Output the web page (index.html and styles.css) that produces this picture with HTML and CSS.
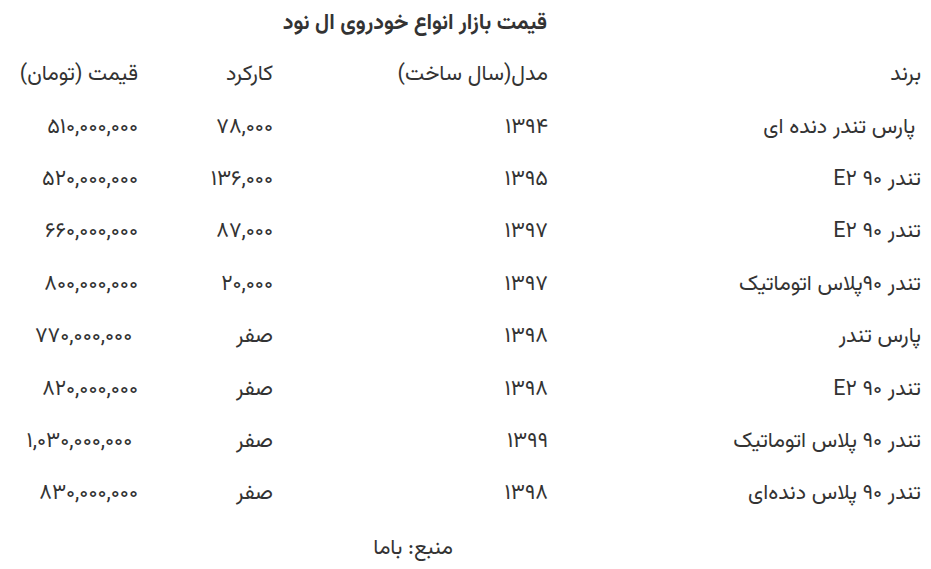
FILE: index.html
```html
<!DOCTYPE html>
<html lang="fa" dir="rtl">
<head>
<meta charset="utf-8">
<link rel="stylesheet" href="styles.css">
</head>
<body>
<div class="page">
  <h2 class="title">قیمت بازار انواع خودروی ال نود</h2>
  <div class="table">
    <div class="row head">
      <div class="cell c1">برند</div>
      <div class="cell c2">مدل(سال ساخت)</div>
      <div class="cell c3">کارکرد</div>
      <div class="cell c4">قیمت (تومان)</div>
    </div>
    <div class="row">
      <div class="cell c1">&nbsp;پارس تندر دنده ای</div>
      <div class="cell c2">۱۳۹۴</div>
      <div class="cell c3">۷۸,۰۰۰</div>
      <div class="cell c4">۵۱۰,۰۰۰,۰۰۰</div>
    </div>
    <div class="row">
      <div class="cell c1">تندر ۹۰ E۲</div>
      <div class="cell c2">۱۳۹۵</div>
      <div class="cell c3">۱۳۶,۰۰۰</div>
      <div class="cell c4">۵۲۰,۰۰۰,۰۰۰</div>
    </div>
    <div class="row">
      <div class="cell c1">تندر ۹۰ E۲</div>
      <div class="cell c2">۱۳۹۷</div>
      <div class="cell c3">۸۷,۰۰۰</div>
      <div class="cell c4">۶۶۰,۰۰۰,۰۰۰</div>
    </div>
    <div class="row">
      <div class="cell c1">تندر ۹۰پلاس اتوماتیک</div>
      <div class="cell c2">۱۳۹۷</div>
      <div class="cell c3">۲۰,۰۰۰</div>
      <div class="cell c4">۸۰۰,۰۰۰,۰۰۰</div>
    </div>
    <div class="row">
      <div class="cell c1">پارس تندر</div>
      <div class="cell c2">۱۳۹۸</div>
      <div class="cell c3">صفر</div>
      <div class="cell c4">&nbsp;۷۷۰,۰۰۰,۰۰۰</div>
    </div>
    <div class="row">
      <div class="cell c1">تندر ۹۰ E۲</div>
      <div class="cell c2">۱۳۹۸</div>
      <div class="cell c3">صفر</div>
      <div class="cell c4">۸۲۰,۰۰۰,۰۰۰</div>
    </div>
    <div class="row">
      <div class="cell c1">تندر ۹۰ پلاس اتوماتیک</div>
      <div class="cell c2">۱۳۹۹</div>
      <div class="cell c3">صفر</div>
      <div class="cell c4">&nbsp;۱,۰۳۰,۰۰۰,۰۰۰</div>
    </div>
    <div class="row">
      <div class="cell c1">تندر ۹۰ پلاس دنده‌ای</div>
      <div class="cell c2">۱۳۹۸</div>
      <div class="cell c3">صفر</div>
      <div class="cell c4">۸۳۰,۰۰۰,۰۰۰</div>
    </div>
  </div>
  <p class="source">منبع: باما</p>
</div>
</body>
</html>
```
FILE: styles.css
```css
html, body {
  margin: 0;
  padding: 0;
  background: #ffffff;
}
body {
  font-family: "Vazirmatn", "DejaVu Sans", sans-serif;
  color: #333333;
  font-size: 21.5px;
}
.page {
  padding: 0 10px 0 8px;
}
.title {
  margin: 0;
  padding-top: 8px;
  height: 40px;
  box-sizing: border-box;
  font-size: 21.5px;
  font-weight: bold;
  line-height: 32px;
  padding-right: 374px;
  text-align: right;
}
.table {
  display: flex;
  flex-direction: column;
  padding-top: 9px;
}
.row {
  display: grid;
  grid-template-columns: 373px 275px 135px 130px;
  height: 52.4px;
  align-items: center;
}
.cell {
  padding-right: 0;
  line-height: 32px;
  white-space: pre;
}
.source {
  margin: 0;
  padding-top: 12px;
  padding-right: 468px;
  line-height: 32px;
}
```
